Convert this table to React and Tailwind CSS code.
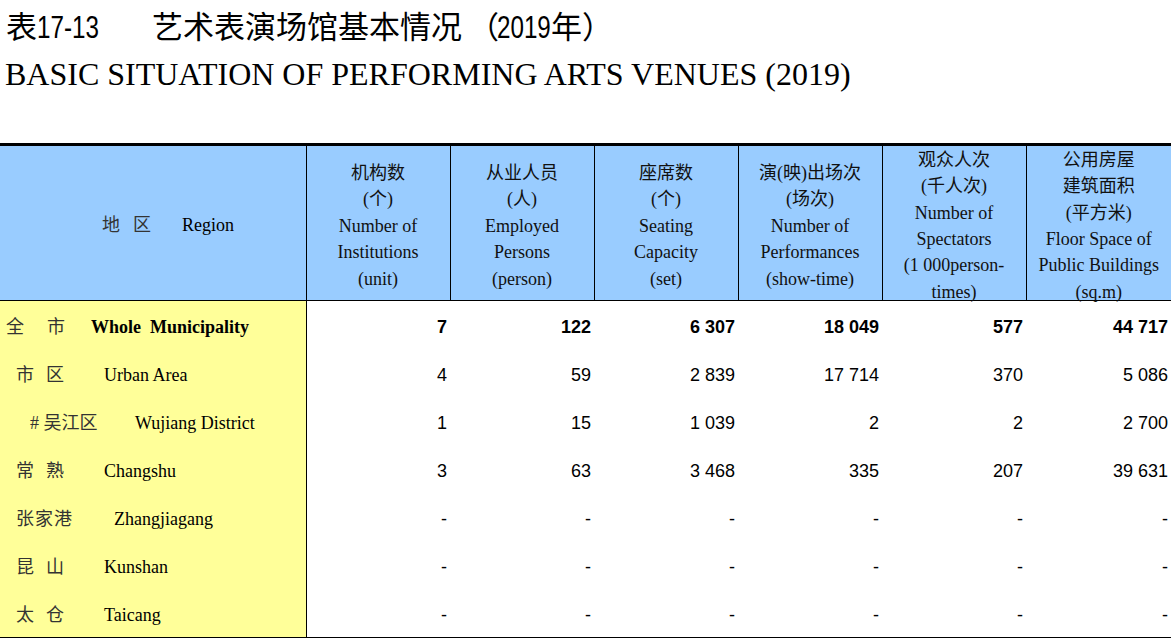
import React from "react";

const headers = [
  ["机构数", "(个)", "Number of", "Institutions", "(unit)"],
  ["从业人员", "(人)", "Employed", "Persons", "(person)"],
  ["座席数", "(个)", "Seating", "Capacity", "(set)"],
  ["演(映)出场次", "(场次)", "Number of", "Performances", "(show-time)"],
  ["观众人次", "(千人次)", "Number of", "Spectators", "(1 000person-", "times)"],
  ["公用房屋", "建筑面积", "(平方米)", "Floor Space of", "Public Buildings", "(sq.m)"],
];

const rows = [
  { cn: "全市", cnCls: "pl-[6px] w-[91px] tracking-[23px]", en: "Whole  Municipality", enCls: "font-bold whitespace-pre", vals: ["7", "122", "6 307", "18 049", "577", "44 717"], bold: true },
  { cn: "市区", cnCls: "pl-[16px] w-[104px] tracking-[12px]", en: "Urban Area", enCls: "", vals: ["4", "59", "2 839", "17 714", "370", "5 086"] },
  { cn: "# 吴江区", cnCls: "pl-[30px] w-[135px]", en: "Wujiang District", enCls: "", vals: ["1", "15", "1 039", "2", "2", "2 700"] },
  { cn: "常熟", cnCls: "pl-[16px] w-[104px] tracking-[12px]", en: "Changshu", enCls: "", vals: ["3", "63", "3 468", "335", "207", "39 631"] },
  { cn: "张家港", cnCls: "pl-[16px] w-[114px] tracking-[1px]", en: "Zhangjiagang", enCls: "", vals: ["-", "-", "-", "-", "-", "-"] },
  { cn: "昆山", cnCls: "pl-[16px] w-[104px] tracking-[12px]", en: "Kunshan", enCls: "", vals: ["-", "-", "-", "-", "-", "-"] },
  { cn: "太仓", cnCls: "pl-[16px] w-[104px] tracking-[12px]", en: "Taicang", enCls: "", vals: ["-", "-", "-", "-", "-", "-"] },
];

function Digits({ text, w }) {
  return (
    <span className={"inline-block align-baseline whitespace-nowrap " + w}>
      <span className="inline-block origin-left scale-x-[0.78] font-['Liberation_Sans',sans-serif]">
        {text}
      </span>
    </span>
  );
}

export default function App() {
  return (
    <div className="w-[1171px] h-[638px] bg-white overflow-hidden text-black">
      <div className="h-[143px] pl-[6px]">
        <div className="pt-[5px] h-[48px] text-[31px] leading-[40px] font-['Noto_Sans_CJK_SC',sans-serif] whitespace-pre flex items-baseline">
          <span>表</span>
          <Digits text="17-13" w="w-[62px]" />
          <span className="pl-[53px]">艺术表演场馆基本情况</span>
          <span className="pl-[6px] w-[35px]">（</span>
          <Digits text="2019" w="w-[54px]" />
          <span>年）</span>
        </div>
        <div className="text-[32px] leading-[52px] font-['Liberation_Serif',serif] -ml-[1px]">
          BASIC SITUATION OF PERFORMING ARTS VENUES (2019)
        </div>
      </div>
      <table className="w-[1171px] table-fixed border-collapse font-['Liberation_Serif','Noto_Sans_CJK_SC',serif] text-[18px]">
        <colgroup>
          <col className="w-[306px]" />
          <col className="w-[144px]" />
          <col className="w-[144px]" />
          <col className="w-[144px]" />
          <col className="w-[144px]" />
          <col className="w-[144px]" />
          <col />
        </colgroup>
        <thead>
          <tr className="bg-[#99ccff] border-t-[3px] border-b border-black">
            <th className="font-normal p-0 align-middle">
              <div className="h-[154px] flex items-center pl-[84px] pt-[4px]">
                <span className="w-[98px] tracking-[13px] text-[#333]">地区</span>
                <span>Region</span>
              </div>
            </th>
            {headers.map((h, i) => (
              <th key={i} className="font-normal p-0 border-l border-black align-middle">
                <div className="h-[154px] flex flex-col items-center justify-center leading-[26.4px] pt-[6px] text-[#111]">
                  {h.map((l, j) => (
                    <div key={j} className="whitespace-nowrap">{l}</div>
                  ))}
                </div>
              </th>
            ))}
          </tr>
        </thead>
        <tbody className="border-b-[2px] border-black">
          {rows.map((r, i) => (
            <tr key={i} className={i === rows.length - 1 ? "h-[49px]" : "h-[48px]"}>
              <td className="bg-[#ffff99] border-r border-black p-0 pt-[6px]">
                <div className="flex items-center">
                  <span className={"inline-block whitespace-nowrap text-[#333] " + r.cnCls}>{r.cn}</span>
                  <span className={r.enCls}>{r.en}</span>
                </div>
              </td>
              {r.vals.map((v, j) => (
                <td
                  key={j}
                  className={
                    "p-0 pt-[6px] pr-[3px] text-right font-['Liberation_Sans',sans-serif] " +
                    (r.bold ? "font-bold" : "")
                  }
                >
                  {v}
                </td>
              ))}
            </tr>
          ))}
        </tbody>
      </table>
    </div>
  );
}
